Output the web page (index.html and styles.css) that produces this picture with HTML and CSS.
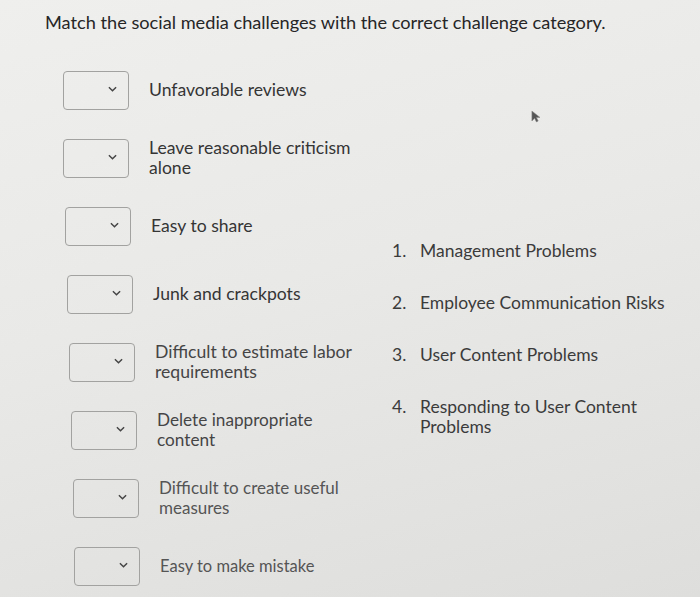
FILE: index.html
```html
<!DOCTYPE html>
<html lang="en">
<head>
  <meta charset="UTF-8">
  <title>Matching Question</title>
  <link rel="stylesheet" href="styles.css">
</head>
<body>

  <h1 class="prompt">Match the social media challenges with the correct challenge category.</h1>

  <div class="question">
    <div class="matches">
      <div class="match-row">
        <div class="select"><svg viewBox="0 0 10 6" width="9" height="6"><path d="M1 1l4 4 4-4" fill="none" stroke="#444" stroke-width="1.6"/></svg></div>
        <div class="match-text">Unfavorable reviews</div>
      </div>
      <div class="match-row">
        <div class="select"><svg viewBox="0 0 10 6" width="9" height="6"><path d="M1 1l4 4 4-4" fill="none" stroke="#444" stroke-width="1.6"/></svg></div>
        <div class="match-text">Leave reasonable criticism<br>alone</div>
      </div>
      <div class="match-row">
        <div class="select"><svg viewBox="0 0 10 6" width="9" height="6"><path d="M1 1l4 4 4-4" fill="none" stroke="#444" stroke-width="1.6"/></svg></div>
        <div class="match-text">Easy to share</div>
      </div>
      <div class="match-row">
        <div class="select"><svg viewBox="0 0 10 6" width="9" height="6"><path d="M1 1l4 4 4-4" fill="none" stroke="#444" stroke-width="1.6"/></svg></div>
        <div class="match-text">Junk and crackpots</div>
      </div>
      <div class="match-row">
        <div class="select"><svg viewBox="0 0 10 6" width="9" height="6"><path d="M1 1l4 4 4-4" fill="none" stroke="#444" stroke-width="1.6"/></svg></div>
        <div class="match-text">Difficult to estimate labor<br>requirements</div>
      </div>
      <div class="match-row">
        <div class="select"><svg viewBox="0 0 10 6" width="9" height="6"><path d="M1 1l4 4 4-4" fill="none" stroke="#444" stroke-width="1.6"/></svg></div>
        <div class="match-text">Delete inappropriate<br>content</div>
      </div>
      <div class="match-row">
        <div class="select"><svg viewBox="0 0 10 6" width="9" height="6"><path d="M1 1l4 4 4-4" fill="none" stroke="#444" stroke-width="1.6"/></svg></div>
        <div class="match-text">Difficult to create useful<br>measures</div>
      </div>
      <div class="match-row">
        <div class="select"><svg viewBox="0 0 10 6" width="9" height="6"><path d="M1 1l4 4 4-4" fill="none" stroke="#444" stroke-width="1.6"/></svg></div>
        <div class="match-text">Easy to make mistake</div>
      </div>
    </div>

    <ol class="categories">
      <li><span class="num">1.</span><span>Management Problems</span></li>
      <li><span class="num">2.</span><span>Employee Communication Risks</span></li>
      <li><span class="num">3.</span><span>User Content Problems</span></li>
      <li><span class="num">4.</span><span>Responding to User Content<br>Problems</span></li>
    </ol>
  </div>

  <svg class="cursor" viewBox="0 0 10 14" width="9" height="13"><path d="M1 1v11l3-3 2 4 2-1-2-4h4z" fill="#555" stroke="#888" stroke-width="0.6"/></svg>

</body>
</html>
```

FILE: styles.css
```css
body {
  margin: 0;
  height: 597px;
  padding: 10px 0 0 45px;
  box-sizing: border-box;
  font-family: Lato, 'Open Sans', sans-serif;
  color: #2f2f2f;
  background: linear-gradient(165deg, #efefee 0%, #e9e9e8 45%, #dededd 100%);
  position: relative;
  overflow: hidden;
}

.prompt {
  font-size: 18.2px;
  font-weight: normal;
  line-height: 24px;
  margin: 0;
  color: #262626;
}

.question {
  display: flex;
  margin-top: 36px;
}

.matches {
  display: flex;
  flex-direction: column;
  gap: 28px;
  padding-left: 18px;
  width: 329px;
}

.match-row {
  display: flex;
  align-items: center;
  height: 40px;
}

/* the shot is taken at a slight angle, rows drift right going down */
.match-row:nth-child(n+3) { margin-left: 2px; }
.match-row:nth-child(n+4) { margin-left: 4px; }
.match-row:nth-child(n+5) { margin-left: 6px; }
.match-row:nth-child(n+6) { margin-left: 8px; }
.match-row:nth-child(n+7) { margin-left: 10px; }
.match-row:nth-child(n+8) { margin-left: 11px; }

.select {
  width: 66px;
  height: 39px;
  border: 1px solid #a2a2a0;
  border-radius: 4px;
  display: flex;
  align-items: center;
  justify-content: flex-end;
  padding-right: 11px;
  box-sizing: border-box;
  flex-shrink: 0;
}

.select svg {
  margin-top: -2px;
}

.match-text {
  margin-left: 20px;
  font-size: 17.6px;
  line-height: 20px;
  color: #353535;
}

.match-row:nth-child(n+5) .match-text {
  color: #454545;
}

.match-row:nth-child(n+6) .match-text {
  font-size: 17.2px;
}

.match-row:nth-child(n+7) .match-text {
  color: #555;
  font-size: 17px;
}

.match-row:nth-child(8) .match-text {
  font-size: 16.5px;
}

.categories {
  list-style: none;
  margin: 171px 0 0;
  padding: 0;
  display: flex;
  flex-direction: column;
  gap: 32px;
  font-size: 17.5px;
  line-height: 20px;
  color: #3b3b3b;
}

.categories li {
  display: flex;
}

.num {
  width: 28px;
  flex-shrink: 0;
}

.cursor {
  position: absolute;
  left: 531px;
  top: 110px;
}
```
